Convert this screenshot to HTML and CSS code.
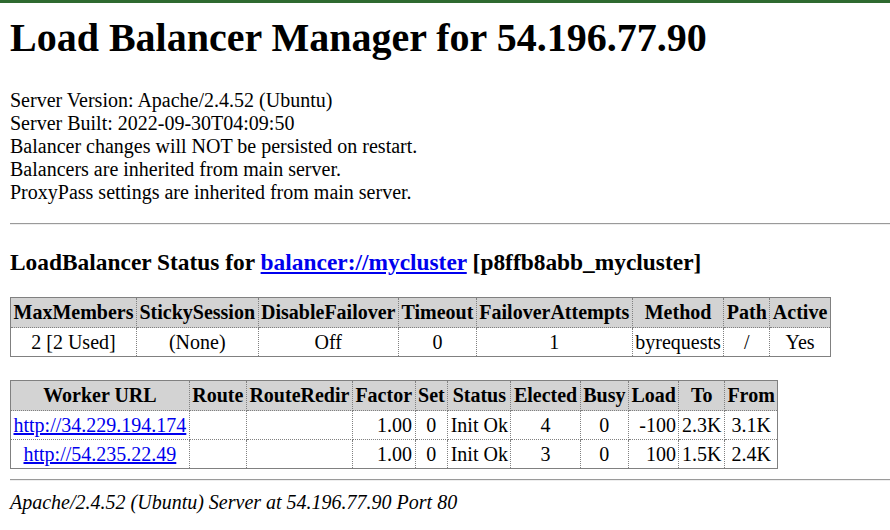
FILE: index.html
```html
<!DOCTYPE html>
<html>
<head>
<meta charset="utf-8">
<title>Balancer Manager</title>
<link rel="stylesheet" href="styles.css">
</head>
<body>
<div class="topbar"></div>
<div class="page">
<h1 class="title">Load Balancer Manager for 54.196.77.90</h1>
<dl class="info">
<dt>Server Version: Apache/2.4.52 (Ubuntu)</dt>
<dt>Server Built: 2022-09-30T04:09:50</dt>
<dt>Balancer changes will NOT be persisted on restart.</dt>
<dt>Balancers are inherited from main server.</dt>
<dt>ProxyPass settings are inherited from main server.</dt>
</dl>
<hr class="rule">
<h3 class="status">LoadBalancer Status for <a href="#">balancer://mycluster</a> [p8ffb8abb_mycluster]</h3>
<table class="grid">
<tr><th>MaxMembers</th><th>StickySession</th><th>DisableFailover</th><th>Timeout</th><th>FailoverAttempts</th><th>Method</th><th>Path</th><th>Active</th></tr>
<tr><td>2 [2 Used]</td><td>(None)</td><td>Off</td><td>0</td><td>1</td><td>byrequests</td><td>/</td><td>Yes</td></tr>
</table>
<br>
<table class="grid">
<tr><th>Worker URL</th><th>Route</th><th>RouteRedir</th><th>Factor</th><th>Set</th><th>Status</th><th>Elected</th><th>Busy</th><th>Load</th><th>To</th><th>From</th></tr>
<tr><td class="l"><a href="#">http://34.229.194.174</a></td><td></td><td></td><td class="r">1.00</td><td>0</td><td class="l">Init Ok</td><td>4</td><td>0</td><td class="r">-100</td><td>2.3K</td><td>3.1K</td></tr>
<tr><td><a href="#">http://54.235.22.49</a></td><td></td><td></td><td class="r">1.00</td><td>0</td><td class="l">Init Ok</td><td>3</td><td>0</td><td class="r">100</td><td>1.5K</td><td>2.4K</td></tr>
</table>
<hr class="rule rule-bottom">
<address class="foot">Apache/2.4.52 (Ubuntu) Server at 54.196.77.90 Port 80</address>
</div>
</body>
</html>
```

FILE: styles.css
```css
html, body {
  margin: 0;
  padding: 0;
  background: #fff;
}
body {
  font-family: "Liberation Serif", "Times New Roman", serif;
  font-size: 20px;
  color: #000;
  overflow: hidden;
}
.topbar {
  height: 3px;
  background: #2f6a30;
}
.page {
  padding: 0 0 0 10px;
}
.title {
  font-size: 40px;
  font-weight: bold;
  margin: 12px 0 0 0;
  line-height: 46px;
}
.info {
  margin: 28px 0 0 0;
  line-height: 23px;
}
.info dt {
  margin: 0;
}
.rule {
  margin: 19px 0 0 0;
  border: none;
  border-top: 1px solid #9a9a9a;
  border-bottom: 1px solid #eeeeee;
  height: 0;
}
.rule-bottom {
  margin-top: 10px;
}
.status {
  font-size: 23.4px;
  font-weight: bold;
  margin: 24px 0 21px 0;
  line-height: 27px;
}
a {
  color: #0000ee;
}
.grid {
  border: 1px solid #808080;
  border-collapse: collapse;
  background: #fff;
  text-align: center;
}
.grid th {
  border: 1px dotted #808080;
  padding: 2px 2.5px;
  background: #d3d3d3;
  font-weight: bold;
  line-height: 25px;
}
.grid td {
  border: 1px dotted #808080;
  padding: 2px 2.5px;
  background: #fff;
  line-height: 24px;
}
.grid td.r { text-align: right; }
.grid td.l { text-align: left; }
.foot {
  font-style: italic;
  margin-top: 10px;
  line-height: 23px;
}
```
